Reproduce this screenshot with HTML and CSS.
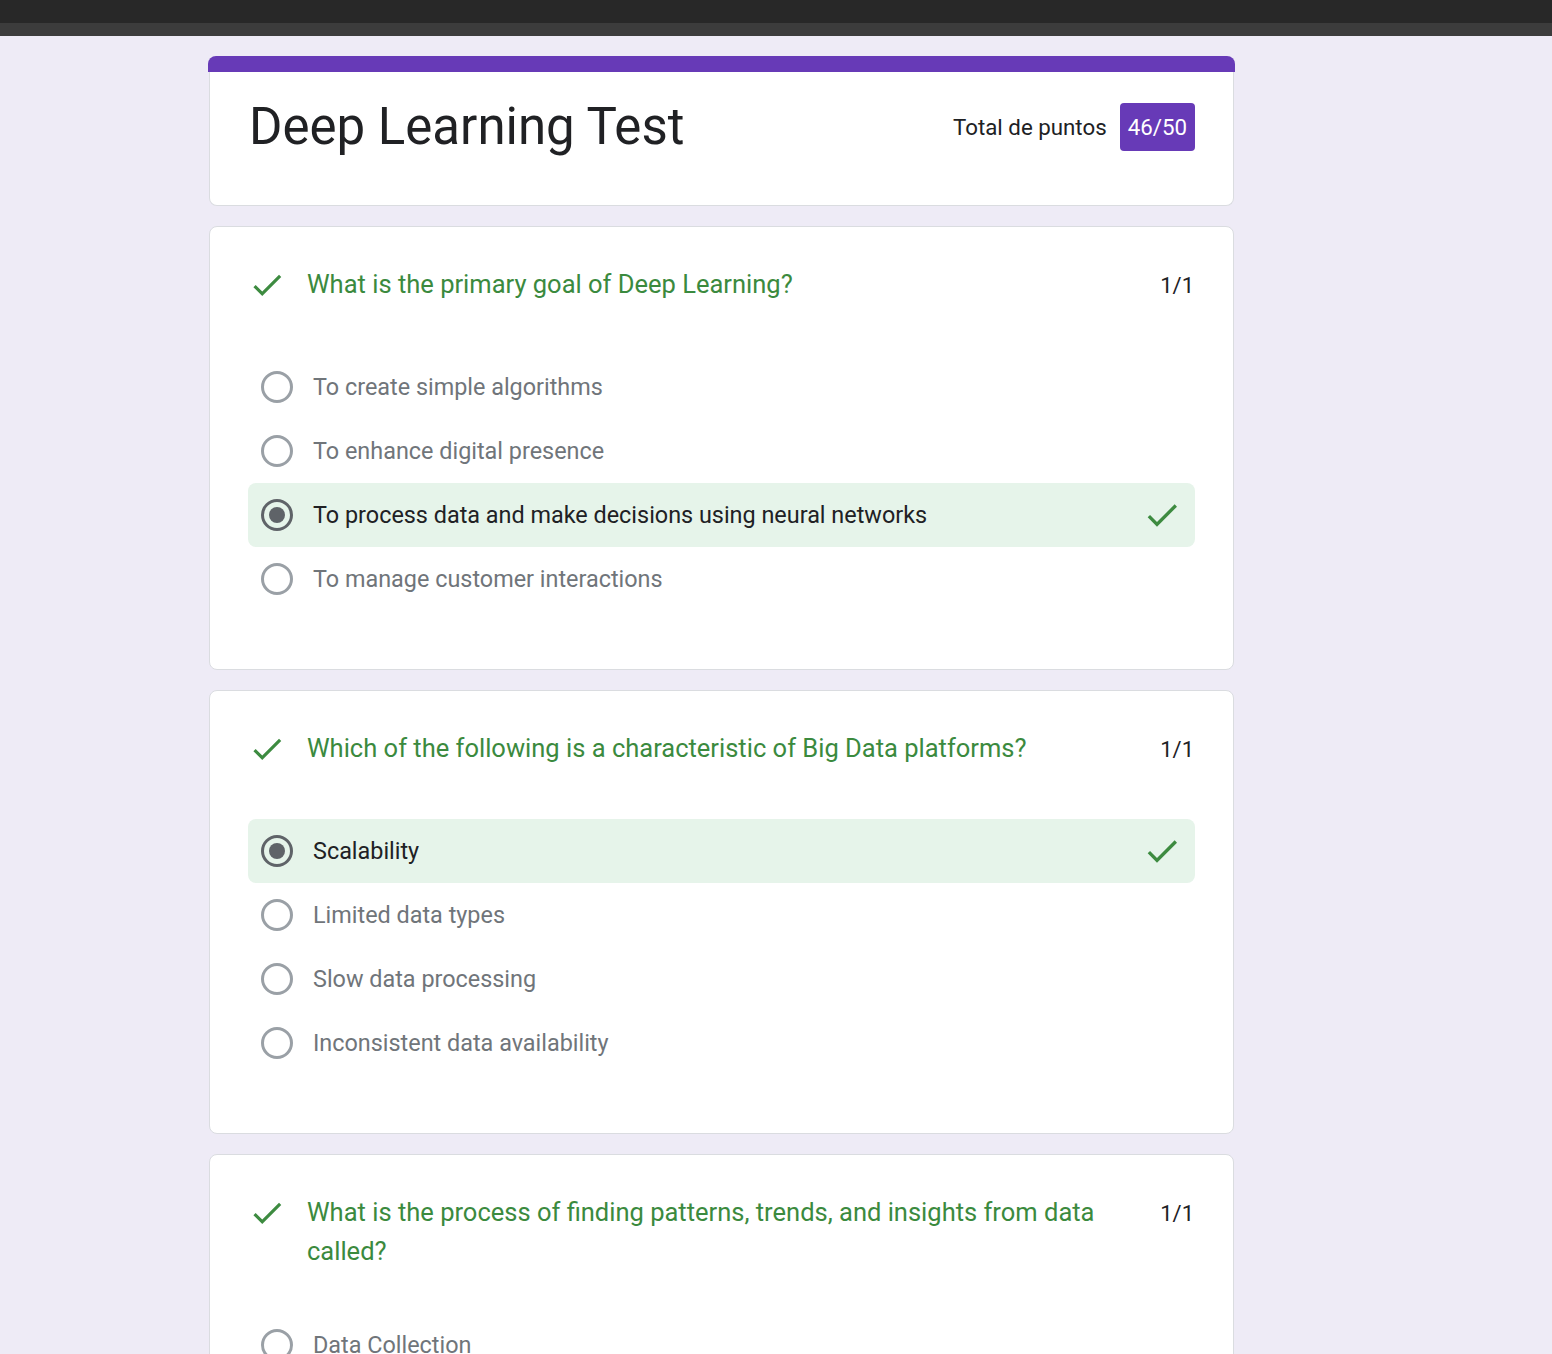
FILE: index.html
```html
<!DOCTYPE html>
<html lang="es">
<head>
<meta charset="utf-8">
<title>Deep Learning Test</title>
<link rel="stylesheet" href="styles.css">
</head>
<body>
<div class="topbar"></div>
<div class="tabbar"></div>
<main class="column">
  <section class="card header-card">
    <div class="band"></div>
    <div class="header-body">
      <h1 class="title">Deep Learning Test</h1>
      <div class="total">
        <span class="total-label">Total de puntos</span>
        <span class="badge">46/50</span>
      </div>
    </div>
  </section>

  <section class="card q-card">
    <div class="q-head">
      <svg class="q-check" viewBox="0 0 24 24"><path d="M9 16.17L4.83 12l-1.42 1.41L9 19 21 7l-1.41-1.41z"/></svg>
      <div class="q-text">What is the primary goal of Deep Learning?</div>
      <div class="q-score">1/1</div>
    </div>
    <div class="options">
      <div class="opt"><span class="radio"></span><span class="opt-text">To create simple algorithms</span></div>
      <div class="opt"><span class="radio"></span><span class="opt-text">To enhance digital presence</span></div>
      <div class="opt correct"><span class="radio checked"></span><span class="opt-text">To process data and make decisions using neural networks</span>
        <svg class="opt-check" viewBox="0 0 24 24"><path d="M9 16.17L4.83 12l-1.42 1.41L9 19 21 7l-1.41-1.41z"/></svg></div>
      <div class="opt"><span class="radio"></span><span class="opt-text">To manage customer interactions</span></div>
    </div>
  </section>

  <section class="card q-card">
    <div class="q-head">
      <svg class="q-check" viewBox="0 0 24 24"><path d="M9 16.17L4.83 12l-1.42 1.41L9 19 21 7l-1.41-1.41z"/></svg>
      <div class="q-text">Which of the following is a characteristic of Big Data platforms?</div>
      <div class="q-score">1/1</div>
    </div>
    <div class="options">
      <div class="opt correct"><span class="radio checked"></span><span class="opt-text">Scalability</span>
        <svg class="opt-check" viewBox="0 0 24 24"><path d="M9 16.17L4.83 12l-1.42 1.41L9 19 21 7l-1.41-1.41z"/></svg></div>
      <div class="opt"><span class="radio"></span><span class="opt-text">Limited data types</span></div>
      <div class="opt"><span class="radio"></span><span class="opt-text">Slow data processing</span></div>
      <div class="opt"><span class="radio"></span><span class="opt-text">Inconsistent data availability</span></div>
    </div>
  </section>

  <section class="card q-card">
    <div class="q-head">
      <svg class="q-check" viewBox="0 0 24 24"><path d="M9 16.17L4.83 12l-1.42 1.41L9 19 21 7l-1.41-1.41z"/></svg>
      <div class="q-text">What is the process of finding patterns, trends, and insights from data called?</div>
      <div class="q-score">1/1</div>
    </div>
    <div class="options">
      <div class="opt"><span class="radio"></span><span class="opt-text">Data Collection</span></div>
      <div class="opt"><span class="radio"></span><span class="opt-text">Data Analysis</span></div>
      <div class="opt"><span class="radio"></span><span class="opt-text">Data Storage</span></div>
    </div>
  </section>
</main>
</body>
</html>
```

FILE: styles.css
```css
* { box-sizing: border-box; }
html, body { margin: 0; padding: 0; }
body {
  background: #eeebf6;
  font-family: Roboto, "Liberation Sans", Arial, sans-serif;
  color: #202124;
  overflow: hidden;
  height: 1354px;
}
.topbar { height: 23px; background: #282828; }
.tabbar { height: 13px; background: #3c3c3c; }

.column {
  width: 1025px;
  margin: 20px 0 0 209px;
  display: flex;
  flex-direction: column;
  gap: 20px;
}
.card {
  background: #fff;
  border: 1px solid #dadce0;
  border-radius: 8px;
}
.header-card {
  border: none;
  background: transparent;
  margin: 0 -1px;
}
.band {
  height: 16px;
  background: #673ab7;
  border-radius: 8px 8px 0 0;
}
.header-body {
  background: #fff;
  margin: 0 1px;
  border: 1px solid #dadce0;
  border-top: none;
  border-radius: 0 0 8px 8px;
  height: 134px;
  padding: 31px 38px 0 39px;
  display: flex;
  align-items: flex-start;
}
.title {
  margin: 0;
  font-weight: 400;
  font-size: 51px;
  line-height: 48px;
  flex: 1;
  color: #202124;
}
.total { display: flex; align-items: center; gap: 13px; }
.total-label { font-size: 22.3px; color: #202124; }
.badge {
  background: #673ab7;
  color: #fff;
  font-size: 22.3px;
  height: 48px;
  line-height: 48px;
  padding: 0 8px;
  border-radius: 4px;
}

.q-card { padding: 38px 38px 58px 38px; }
.q-head {
  display: flex;
  align-items: flex-start;
  min-height: 48px;
}
.q-check {
  width: 38px;
  height: 38px;
  fill: #3d8b40;
  margin: 1px 21px 0 0;
  flex: none;
}
.q-text {
  flex: 1;
  font-size: 25.5px;
  line-height: 39px;
  color: #3b8a3e;
  padding-right: 40px;
}
.q-score {
  font-size: 22px;
  line-height: 41px;
  color: #202124;
  padding-right: 1px;
}
.options {
  margin-top: 42px;
  display: flex;
  flex-direction: column;
}
.opt {
  height: 64px;
  display: flex;
  align-items: center;
  padding: 0 13px 0 13px;
  border-radius: 8px;
}
.opt.correct { background: #e6f4ea; }
.radio {
  width: 32px;
  height: 32px;
  border: 3px solid #9aa0a6;
  border-radius: 50%;
  flex: none;
  margin-right: 20px;
  position: relative;
}
.radio.checked { border-color: #5f6368; }
.radio.checked::after {
  content: "";
  position: absolute;
  left: 5px; top: 5px;
  width: 16px; height: 16px;
  border-radius: 50%;
  background: #5f6368;
}
.opt-text {
  flex: 1;
  font-size: 23.4px;
  color: #70757a;
}
.opt.correct .opt-text { color: #202124; }
.opt-check {
  width: 40px;
  height: 40px;
  fill: #3d8b40;
  flex: none;
}
```
